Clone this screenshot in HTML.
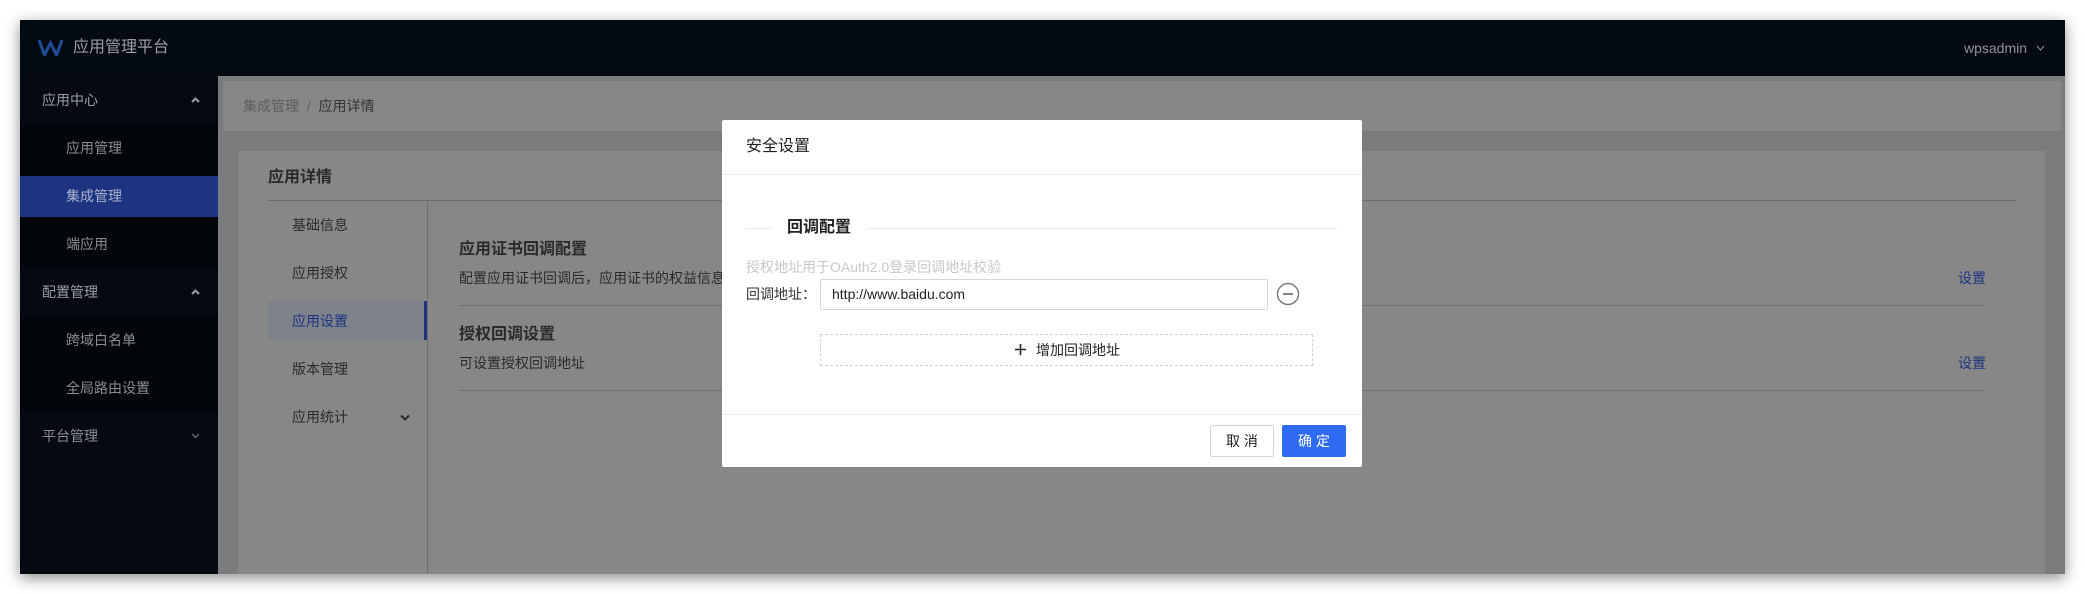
<!DOCTYPE html>
<html><head><meta charset="utf-8"><style>
*{margin:0;padding:0;box-sizing:border-box}
body{width:2085px;height:594px;background:#fff;position:relative;overflow:hidden;font-family:"Liberation Sans","Noto Sans CJK SC",sans-serif}
.a{position:absolute;white-space:nowrap}
.win{position:absolute;left:20px;top:20px;width:2045px;height:554px;background:#7a7b7d;box-shadow:0 4px 14px rgba(0,0,0,.45);overflow:hidden}
.sb{color:#8a8d92;font-size:14px;line-height:48px}
</style></head><body>
<div class="win">
 <div class="a" style="left:0;top:0;width:2045px;height:56px;background:#030a12"></div>
 <svg class="a" style="left:18px;top:19px" width="25" height="17" viewBox="0 0 25 17"><path d="M1 1 L6.5 16 L12.5 4 L18.5 16 L24 1" fill="none" stroke="#1e4a96" stroke-width="3"/></svg>
 <div class="a" style="left:53px;top:16px;font-size:16px;color:#9a9da2;line-height:24px">应用管理平台</div>
 <div class="a" style="right:38px;top:16px;font-size:14px;color:#8f9296;line-height:24px">wpsadmin</div>
 <svg class="a" style="left:2016px;top:25px" width="9" height="6" viewBox="0 0 9 6"><path d="M1 1l3.5 4L8 1" fill="none" stroke="#8f9296" stroke-width="1"/></svg>
 <!-- sidebar -->
 <div class="a" style="left:0;top:56px;width:198px;height:498px;background:#050a12"></div>
 <div class="a" style="left:0;top:104px;width:198px;height:144px;background:#020509"></div>
 <div class="a" style="left:0;top:296px;width:198px;height:96px;background:#020509"></div>
 <div class="a" style="left:0;top:156px;width:198px;height:41px;background:#1e3482"></div>
 <div class="a sb" style="left:22px;top:56px;color:#9a9da2">应用中心</div>
 <svg class="a" style="left:171px;top:77px" width="9" height="6" viewBox="0 0 9 6"><path d="M1 5l3.5-3.5L8 5" fill="none" stroke="#9a9da2" stroke-width="2"/></svg>
 <div class="a sb" style="left:46px;top:104px">应用管理</div>
 <div class="a sb" style="left:46px;top:152px;color:#a9b2cc">集成管理</div>
 <div class="a sb" style="left:46px;top:200px">端应用</div>
 <div class="a sb" style="left:22px;top:248px;color:#9a9da2">配置管理</div>
 <svg class="a" style="left:171px;top:269px" width="9" height="6" viewBox="0 0 9 6"><path d="M1 5l3.5-3.5L8 5" fill="none" stroke="#9a9da2" stroke-width="2"/></svg>
 <div class="a sb" style="left:46px;top:296px">跨域白名单</div>
 <div class="a sb" style="left:46px;top:344px">全局路由设置</div>
 <div class="a sb" style="left:22px;top:392px">平台管理</div>
 <svg class="a" style="left:171px;top:413px" width="9" height="6" viewBox="0 0 9 6"><path d="M1 1l3.5 3.5L8 1" fill="none" stroke="#6a6d72" stroke-width="1.3"/></svg>
 <!-- breadcrumb -->
 <div class="a" style="left:203px;top:61px;width:1838px;height:50px;background:#878787"></div>
 <div class="a" style="left:223px;top:76px;font-size:14px;color:#5e5e5e;line-height:20px">集成管理 &nbsp;/ &nbsp;<span style="color:#333">应用详情</span></div>
 <!-- card -->
 <div class="a" style="left:218px;top:131px;width:1807px;height:430px;background:#878787"></div>
 <div class="a" style="left:248px;top:147px;font-size:16px;color:#2a2a2a;font-weight:bold;line-height:22px">应用详情</div>
 <div class="a" style="left:248px;top:180px;width:1748px;height:1px;background:#6e6e6e"></div>
 <div class="a" style="left:407px;top:181px;width:1px;height:380px;background:#6e6e6e"></div>
 <div class="a" style="left:248px;top:281px;width:159px;height:39px;background:#7d828b;border-right:3px solid #1e3482"></div>
 <div class="a" style="left:272px;top:195px;font-size:14px;color:#2a2a2a;line-height:20px">基础信息</div>
 <div class="a" style="left:272px;top:243px;font-size:14px;color:#2a2a2a;line-height:20px">应用授权</div>
 <div class="a" style="left:272px;top:291px;font-size:14px;color:#1e3482;line-height:20px">应用设置</div>
 <div class="a" style="left:272px;top:339px;font-size:14px;color:#2a2a2a;line-height:20px">版本管理</div>
 <div class="a" style="left:272px;top:387px;font-size:14px;color:#2a2a2a;line-height:20px">应用统计</div>
 <svg class="a" style="left:380px;top:394px" width="10" height="7" viewBox="0 0 10 7"><path d="M1 1.5l4 4 4-4" fill="none" stroke="#2a2a2a" stroke-width="2"/></svg>
 <div class="a" style="left:439px;top:219px;font-size:16px;font-weight:bold;color:#2a2a2a;line-height:22px">应用证书回调配置</div>
 <div class="a" style="left:439px;top:248px;font-size:14px;color:#2a2a2a;line-height:20px">配置应用证书回调后，应用证书的权益信息</div>
 <div class="a" style="left:1938px;top:248px;font-size:14px;color:#1e3482;line-height:20px">设置</div>
 <div class="a" style="left:439px;top:285px;width:1526px;height:1px;background:#6e6e6e"></div>
 <div class="a" style="left:439px;top:304px;font-size:16px;font-weight:bold;color:#2a2a2a;line-height:22px">授权回调设置</div>
 <div class="a" style="left:439px;top:333px;font-size:14px;color:#2a2a2a;line-height:20px">可设置授权回调地址</div>
 <div class="a" style="left:1938px;top:333px;font-size:14px;color:#1e3482;line-height:20px">设置</div>
 <div class="a" style="left:439px;top:370px;width:1526px;height:1px;background:#6e6e6e"></div>
</div>
<!-- modal -->
<div class="a" style="left:722px;top:120px;width:640px;height:347px;background:#fff;border-radius:2px"></div>
<div class="a" style="left:746px;top:136px;font-size:16px;color:#1f1f1f;line-height:22px">安全设置</div>
<div class="a" style="left:722px;top:174px;width:640px;height:1px;background:#ececec"></div>
<div class="a" style="left:746px;top:228px;width:25px;height:1px;background:#ececec"></div>
<div class="a" style="left:867px;top:228px;width:471px;height:1px;background:#ececec"></div>
<div class="a" style="left:787px;top:217px;font-size:16px;font-weight:bold;color:#222;line-height:22px">回调配置</div>
<div class="a" style="left:746px;top:257px;font-size:14px;color:#c8c8c8;line-height:20px">授权地址用于OAuth2.0登录回调地址校验</div>
<div class="a" style="left:746px;top:284px;font-size:14px;color:#333;line-height:20px">回调地址：</div>
<div class="a" style="left:820px;top:279px;width:448px;height:31px;border:1px solid #d6d6d6;border-radius:2px"></div>
<div class="a" style="left:832px;top:284px;font-size:14px;color:#222;line-height:20px">http://www.baidu.com</div>
<svg class="a" style="left:1276px;top:282px" width="24" height="24" viewBox="0 0 24 24"><circle cx="12" cy="12" r="10.5" fill="none" stroke="#777" stroke-width="1.4"/><path d="M7 12h10" stroke="#666" stroke-width="1.6"/></svg>
<div class="a" style="left:820px;top:334px;width:493px;height:32px;border:1px dashed #d0d0d0"></div>
<svg class="a" style="left:1015px;top:344px" width="11" height="11" viewBox="0 0 11 11"><path d="M5.5 0v11M0 5.5h11" stroke="#222" stroke-width="1.6"/></svg>
<div class="a" style="left:1036px;top:340px;font-size:14px;color:#222;line-height:20px">增加回调地址</div>
<div class="a" style="left:722px;top:414px;width:640px;height:1px;background:#ececec"></div>
<div class="a" style="left:1210px;top:425px;width:64px;height:32px;border:1px solid #d6d6d6;border-radius:2px;font-size:14px;color:#222;line-height:30px;text-align:center">取 消</div>
<div class="a" style="left:1282px;top:425px;width:64px;height:32px;background:#2f6bf2;border-radius:2px;font-size:14px;color:#fff;line-height:32px;text-align:center">确 定</div>
</body></html>
